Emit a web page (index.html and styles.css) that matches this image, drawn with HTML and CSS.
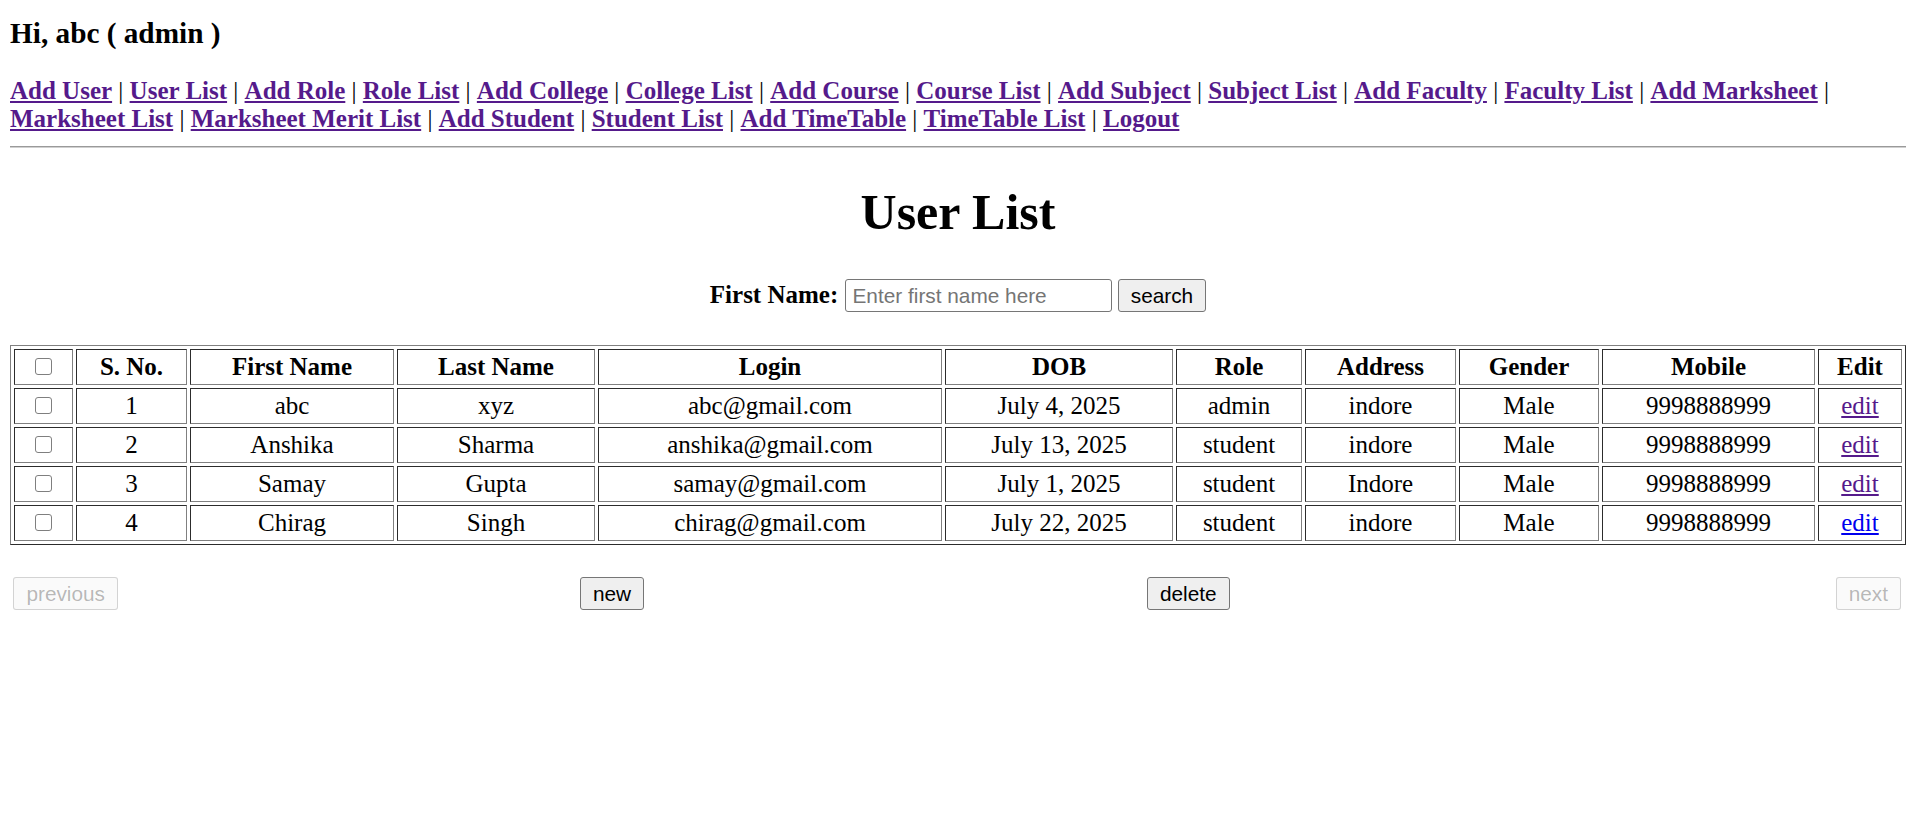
FILE: index.html
```html
<!DOCTYPE html>
<html>
<head>
<meta charset="utf-8">
<title>User List</title>
<link rel="stylesheet" href="styles.css">
</head>
<body>
<h3 class="greeting">Hi, abc ( admin )</h3>
<nav class="menu">
<a class="menu-link" href="#">Add User</a> | <a class="menu-link" href="#">User List</a> | <a class="menu-link" href="#">Add Role</a> | <a class="menu-link" href="#">Role List</a> | <a class="menu-link" href="#">Add College</a> | <a class="menu-link" href="#">College List</a> | <a class="menu-link" href="#">Add Course</a> | <a class="menu-link" href="#">Course List</a> | <a class="menu-link" href="#">Add Subject</a> | <a class="menu-link" href="#">Subject List</a> | <a class="menu-link" href="#">Add Faculty</a> | <a class="menu-link" href="#">Faculty List</a> | <a class="menu-link" href="#">Add Marksheet</a> | <a class="menu-link" href="#">Marksheet List</a> | <a class="menu-link" href="#">Marksheet Merit List</a> | <a class="menu-link" href="#">Add Student</a> | <a class="menu-link" href="#">Student List</a> | <a class="menu-link" href="#">Add TimeTable</a> | <a class="menu-link" href="#">TimeTable List</a> | <a class="menu-link" href="#">Logout</a>
</nav>
<hr class="divider">
<h1 class="title">User List</h1>
<form class="list-form">
<div class="search"><label class="search-label">First Name:</label> <input class="search-input" type="text" placeholder="Enter first name here"> <button class="btn" type="button">search</button></div>
<table class="grid">
<colgroup>
<col class="c-check"><col class="c-sno"><col class="c-first"><col class="c-last"><col class="c-login"><col class="c-dob"><col class="c-role"><col class="c-addr"><col class="c-gender"><col class="c-mobile"><col class="c-edit">
</colgroup>
<tr>
<th><input class="row-check" type="checkbox"></th>
<th>S. No.</th><th>First Name</th><th>Last Name</th><th>Login</th><th>DOB</th><th>Role</th><th>Address</th><th>Gender</th><th>Mobile</th><th>Edit</th>
</tr>
<tr>
<td><input class="row-check" type="checkbox"></td>
<td>1</td><td>abc</td><td>xyz</td><td>abc@gmail.com</td><td>July 4, 2025</td><td>admin</td><td>indore</td><td>Male</td><td>9998888999</td><td><a class="edit-link" href="#">edit</a></td>
</tr>
<tr>
<td><input class="row-check" type="checkbox"></td>
<td>2</td><td>Anshika</td><td>Sharma</td><td>anshika@gmail.com</td><td>July 13, 2025</td><td>student</td><td>indore</td><td>Male</td><td>9998888999</td><td><a class="edit-link" href="#">edit</a></td>
</tr>
<tr>
<td><input class="row-check" type="checkbox"></td>
<td>3</td><td>Samay</td><td>Gupta</td><td>samay@gmail.com</td><td>July 1, 2025</td><td>student</td><td>Indore</td><td>Male</td><td>9998888999</td><td><a class="edit-link" href="#">edit</a></td>
</tr>
<tr>
<td><input class="row-check" type="checkbox"></td>
<td>4</td><td>Chirag</td><td>Singh</td><td>chirag@gmail.com</td><td>July 22, 2025</td><td>student</td><td>indore</td><td>Male</td><td>9998888999</td><td><a class="edit-link edit-link-new" href="#">edit</a></td>
</tr>
</table>
<div class="pager">
<div class="pager-cell"><button class="btn btn-disabled" type="button" disabled>previous</button></div>
<div class="pager-cell"><button class="btn" type="button">new</button></div>
<div class="pager-cell"><button class="btn" type="button">delete</button></div>
<div class="pager-cell pager-end"><button class="btn btn-disabled" type="button" disabled>next</button></div>
</div>
</form>
</body>
</html>
```

FILE: styles.css
```css
html, body {
  background: #ffffff;
}

body {
  margin: 0 10px 10px;
  font-family: "Liberation Serif", "Times New Roman", serif;
  font-size: 25px;
  color: #000000;
}

.greeting {
  font-size: 29.25px;
  font-weight: bold;
  line-height: normal;
  margin: 17px 0 27.3px;
}

.menu {
  font-size: 25px;
  line-height: normal;
  margin: 0;
}

.menu-link {
  font-weight: bold;
  color: #551a8b;
  text-decoration: underline;
}

.divider {
  border: 0;
  border-top: 1px solid #9a9a9a;
  border-bottom: 1px solid #d0d0d0;
  height: 0;
  margin: 12.3px 0 0;
}

.title {
  font-size: 50px;
  font-weight: bold;
  line-height: normal;
  text-align: center;
  margin: 35px 0 38.6px;
}

.list-form {
  margin: 0;
}

.search {
  text-align: center;
  margin: 0 0 33px;
}

.search-label {
  font-weight: bold;
}

.search-input {
  font-family: "Liberation Sans", Arial, sans-serif;
  font-size: 20.8px;
  width: 267px;
  height: 33px;
  box-sizing: border-box;
  border: 1px solid #767676;
  border-radius: 3px;
  padding: 0 7px;
  margin: 0;
  vertical-align: baseline;
  color: #000000;
  background: #ffffff;
}

.search-input::placeholder {
  color: #757575;
}

.btn {
  font-family: "Liberation Sans", Arial, sans-serif;
  font-size: 20.8px;
  height: 33px;
  box-sizing: border-box;
  padding: 0 12px;
  margin: 0;
  border: 1px solid #767676;
  border-radius: 3px;
  background: #efefef;
  color: #000000;
}

.btn-disabled {
  color: rgba(16, 16, 16, 0.3);
  background: rgba(239, 239, 239, 0.3);
  border-color: rgba(118, 118, 118, 0.3);
}

.grid {
  width: 100%;
  table-layout: fixed;
  border-collapse: separate;
  border-spacing: 3px;
  border: 1px outset gray;
  margin: 0;
}

.grid th,
.grid td {
  border: 1px inset gray;
  padding: 1px;
  line-height: 32px;
  text-align: center;
  font-size: 25px;
}

.grid th {
  font-weight: bold;
}

.c-check { width: 59px; }
.c-sno { width: 111px; }
.c-first { width: 204px; }
.c-last { width: 198px; }
.c-login { width: 344px; }
.c-dob { width: 228px; }
.c-role { width: 126px; }
.c-addr { width: 151px; }
.c-gender { width: 140px; }
.c-mobile { width: 213px; }
.c-edit { width: 84px; }

.row-check {
  -webkit-appearance: none;
  appearance: none;
  box-sizing: border-box;
  width: 17px;
  height: 17px;
  margin: 0;
  border: 1.5px solid #7f7f7f;
  border-radius: 3px;
  background: #ffffff;
  vertical-align: baseline;
}

.edit-link {
  color: #551a8b;
  text-decoration: underline;
}

.edit-link-new {
  color: #0000ee;
}

.pager {
  display: grid;
  grid-template-columns: 566.6px 567px 1fr auto;
  margin-top: 32px;
  padding: 0 5px 0 3.4px;
}

.pager-end {
  text-align: right;
}
```
